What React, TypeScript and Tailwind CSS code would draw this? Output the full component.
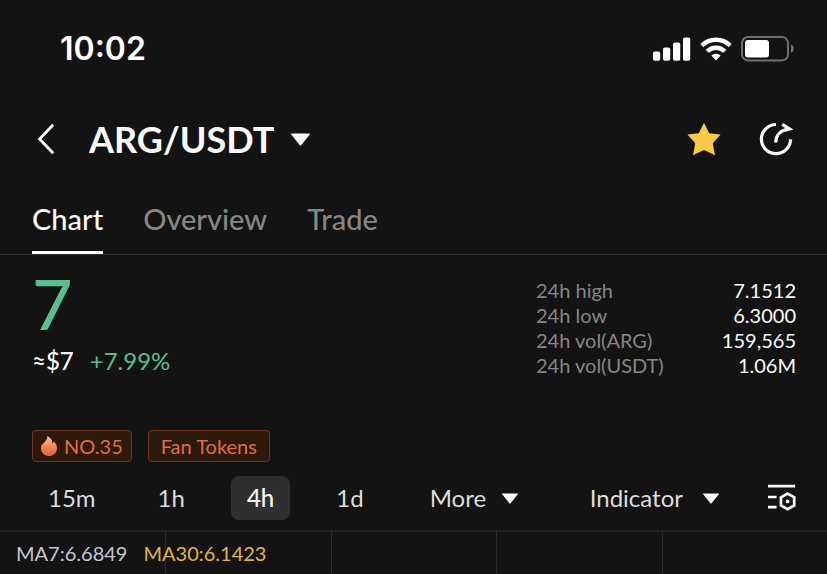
import React from 'react';

const tabs = ['Chart', 'Overview', 'Trade'];

const stats = [
  { label: '24h high', value: '7.1512' },
  { label: '24h low', value: '6.3000' },
  { label: '24h vol(ARG)', value: '159,565' },
  { label: '24h vol(USDT)', value: '1.06M' }
];

const intervals = ['15m', '1h', '4h', '1d'];

function Caret({ className }: { className: string }) {
  return (
    <svg viewBox="0 0 18 12" className={className} fill="#fafafa" aria-hidden="true">
      <path d="M0.6 0.4h16.8c.5 0 .7.4.4.8L9.7 11.4c-.4.5-1 .5-1.4 0L.2 1.2C-.1.8.1.4.6.4z" />
    </svg>
  );
}

function StatusBar() {
  return (
    <div className="flex h-[98px] items-center justify-between pl-[60px] pr-[33px]">
      <span className="font-['Inter',sans-serif] text-[32px] leading-10 font-semibold">10:02</span>
      <div className="flex items-center gap-[9px]">
        <svg viewBox="0 0 38 24" className="h-6 w-[38px]" fill="#fff" aria-hidden="true">
          <rect x="0" y="14.5" width="7.2" height="9.2" rx="1.8" />
          <rect x="10" y="10.5" width="7.2" height="13.2" rx="1.8" />
          <rect x="20" y="5.5" width="7.2" height="18.2" rx="1.8" />
          <rect x="30" y="0.5" width="7.2" height="23.2" rx="1.8" />
        </svg>
        <svg viewBox="0 0 32 24" className="h-6 w-8" fill="none" stroke="#fff" aria-hidden="true">
          <path d="M1.8 8.6a20.2 20.2 0 0 1 28.4 0" strokeWidth="4.4" />
          <path d="M7.2 14.3a12.5 12.5 0 0 1 17.6 0" strokeWidth="4.4" />
          <path d="M11.3 18.6a6.8 6.8 0 0 1 9.4 0L16 23.6z" fill="#fff" stroke="none" />
        </svg>
        <svg viewBox="0 0 53 26" className="h-[26px] w-[53px]" fill="none" aria-hidden="true">
          <rect x="1" y="1" width="46" height="23.4" rx="6" stroke="#6f6f6f" strokeWidth="2" />
          <rect x="4" y="4" width="24" height="17.4" rx="3" fill="#fff" />
          <path d="M50 8.6c1.8.8 2.8 2.4 2.8 4.2s-1 3.4-2.8 4.2z" fill="#6f6f6f" />
        </svg>
      </div>
    </div>
  );
}

function Header() {
  return (
    <header className="flex h-[82px] items-center pl-9 pr-[34px]">
      <button type="button" aria-label="Back" className="w-[53px]">
        <svg viewBox="0 0 20 32" className="h-8 w-5" fill="none" stroke="#fafafa" strokeWidth="2.8" aria-hidden="true">
          <path d="M17.2 1.8 3.6 16l13.6 14.2" />
        </svg>
      </button>
      <label className="flex items-center gap-[17px]">
        <select aria-label="Trading pair" className="field-sizing-content appearance-none bg-transparent text-4xl leading-[50px] font-bold text-[#fafafa]">
          <option>ARG/USDT</option>
        </select>
        <Caret className="h-[13px] w-[19px]" />
      </label>
      <button type="button" aria-label="Favourite" className="ml-auto">
        <svg viewBox="0 0 34 34" className="size-[34px]" fill="#f7ca46" aria-hidden="true">
          <path d="M17 .8 22.2 11.2 33.6 12.6 25.8 21.2 28 33.2 17 28 6 33.2 8.2 21.2.4 12.6 11.8 11.2z" />
        </svg>
      </button>
      <button type="button" aria-label="Share" className="ml-[38px]">
        <svg viewBox="0 0 34 34" className="size-[34px]" fill="none" stroke="#fafafa" strokeWidth="3.2" aria-hidden="true">
          <path d="M17 2.5A14.6 14.6 0 1 0 31.6 17.2" />
          <path d="M16.8 20.4c0-7 4.4-11.8 11.6-13.2" />
          <path d="M23.2 2.4 30.6 7 26 8.200" />
        </svg>
      </button>
    </header>
  );
}

function Tabs() {
  return (
    <nav className="flex gap-10 border-b border-[#303030] px-8 pt-[18px]">
      {tabs.map((tab, index) => (
        <a
          key={tab}
          href="#"
          className={
            index === 0
              ? 'border-b-3 border-white pb-3 text-[29px] leading-[41px] font-medium text-[#fafafa]'
              : 'border-b-3 border-transparent pb-3 text-[29px] leading-[41px] font-medium text-[#868686]'
          }
        >
          {tab}
        </a>
      ))}
    </nav>
  );
}

function Summary() {
  return (
    <section className="flex justify-between pt-3 pl-8 pr-[31px]">
      <div>
        <p className="text-[70px] leading-[72px] font-medium text-[#58c090]">7</p>
        <p className="mt-2 flex gap-4 text-2xl leading-7">
          <span className="font-medium text-[#fafafa]">≈$7</span>
          <span className="text-[#58c090]">+7.99%</span>
        </p>
      </div>
      <dl className="w-[260px] pt-[11px] text-xl leading-[25px]">
        {stats.map((stat) => (
          <div key={stat.label} className="flex justify-between">
            <dt className="text-[#868686]">{stat.label}</dt>
            <dd className="text-[#fafafa]">{stat.value}</dd>
          </div>
        ))}
      </dl>
    </section>
  );
}

function Tags() {
  return (
    <div className="mt-[52px] flex gap-4 px-8 text-xl leading-[30px] text-[#de7138]">
      <a href="#" className="flex items-center gap-[7px] rounded-sm border border-[#6b371c] bg-[#2f190c] px-2">
        <svg viewBox="0 0 16 20" className="h-5 w-4" aria-hidden="true">
          <defs>
            <linearGradient id="flame" x1="0" y1="0" x2="0" y2="1">
              <stop offset="0" stopColor="#f6c49a" />
              <stop offset="0.5" stopColor="#ee8a60" />
              <stop offset="1" stopColor="#e0603c" />
            </linearGradient>
          </defs>
          <path
            d="M6.2 0C10 1.8 11.6 4.5 11.4 7.6c.9-.4 1.3-1.2 1.3-2.3C15 7.2 16 9.6 16 12.2 16 16.8 12.4 20 8 20s-8-3.2-8-7.6C0 8.2 2.8 7.2 4.6 5 5.9 3.4 6.6 1.8 6.2 0z"
            fill="url(#flame)"
          />
        </svg>
        NO.35
      </a>
      <a href="#" className="rounded-sm border border-[#6b371c] bg-[#2f190c] px-3">
        Fan Tokens
      </a>
    </div>
  );
}

function Toolbar() {
  return (
    <div className="mt-[14px] flex items-center justify-between border-b-2 border-[#1f1f1f] pb-[10px] pl-8 pr-[30px] text-2xl leading-[44px] text-[#dcdcdc]">
      <div className="flex items-center gap-[30px]">
        {intervals.map((interval) => (
          <button
            key={interval}
            type="button"
            className={interval === '4h' ? 'rounded-lg bg-[#2f2f2f] px-4 font-medium text-[#fafafa]' : 'px-4'}
          >
            {interval}
          </button>
        ))}
        <label className="flex items-center gap-4 pl-5">
          <select aria-label="More intervals" className="field-sizing-content appearance-none bg-transparent">
            <option>More</option>
          </select>
          <Caret className="h-[11px] w-4" />
        </label>
      </div>
      <div className="flex items-center gap-12">
        <label className="flex items-center gap-5">
          <select aria-label="Indicator" className="field-sizing-content appearance-none bg-transparent">
            <option>Indicator</option>
          </select>
          <Caret className="h-[11px] w-4" />
        </label>
        <button type="button" aria-label="Chart settings">
          <svg viewBox="0 0 30 28" className="h-7 w-[30px]" fill="none" stroke="#fafafa" strokeWidth="2.7" aria-hidden="true">
            <path d="M1 2.2h27.2M1 13h8.6M1 23.2h8.6" />
            <path d="M20.6 9.6 27.2 13.4V21.4L20.6 25.2 14 21.4V13.4z" />
            <circle cx="20.6" cy="17.4" r="1.9" fill="#fafafa" stroke="none" />
          </svg>
        </button>
      </div>
    </div>
  );
}

function ChartArea() {
  return (
    <section className="relative">
      <div className="grid h-[42px] grid-cols-5">
        <div />
        <div className="border-l border-[#2b2b2b]" />
        <div className="border-l border-[#2b2b2b]" />
        <div className="border-l border-[#2b2b2b]" />
        <div className="border-l border-[#2b2b2b]" />
      </div>
      <div className="absolute left-4 top-[7px] flex gap-4 text-xl leading-7">
        <span className="text-[#c5c6d4]">MA7:6.6849</span>
        <span className="text-[#e3b341]">MA30:6.1423</span>
      </div>
    </section>
  );
}

export default function App() {
  return (
    <main className="min-h-screen overflow-hidden bg-[#131313] font-['Lato',sans-serif] text-white">
      <StatusBar />
      <Header />
      <Tabs />
      <Summary />
      <Tags />
      <Toolbar />
      <ChartArea />
    </main>
  );
}
